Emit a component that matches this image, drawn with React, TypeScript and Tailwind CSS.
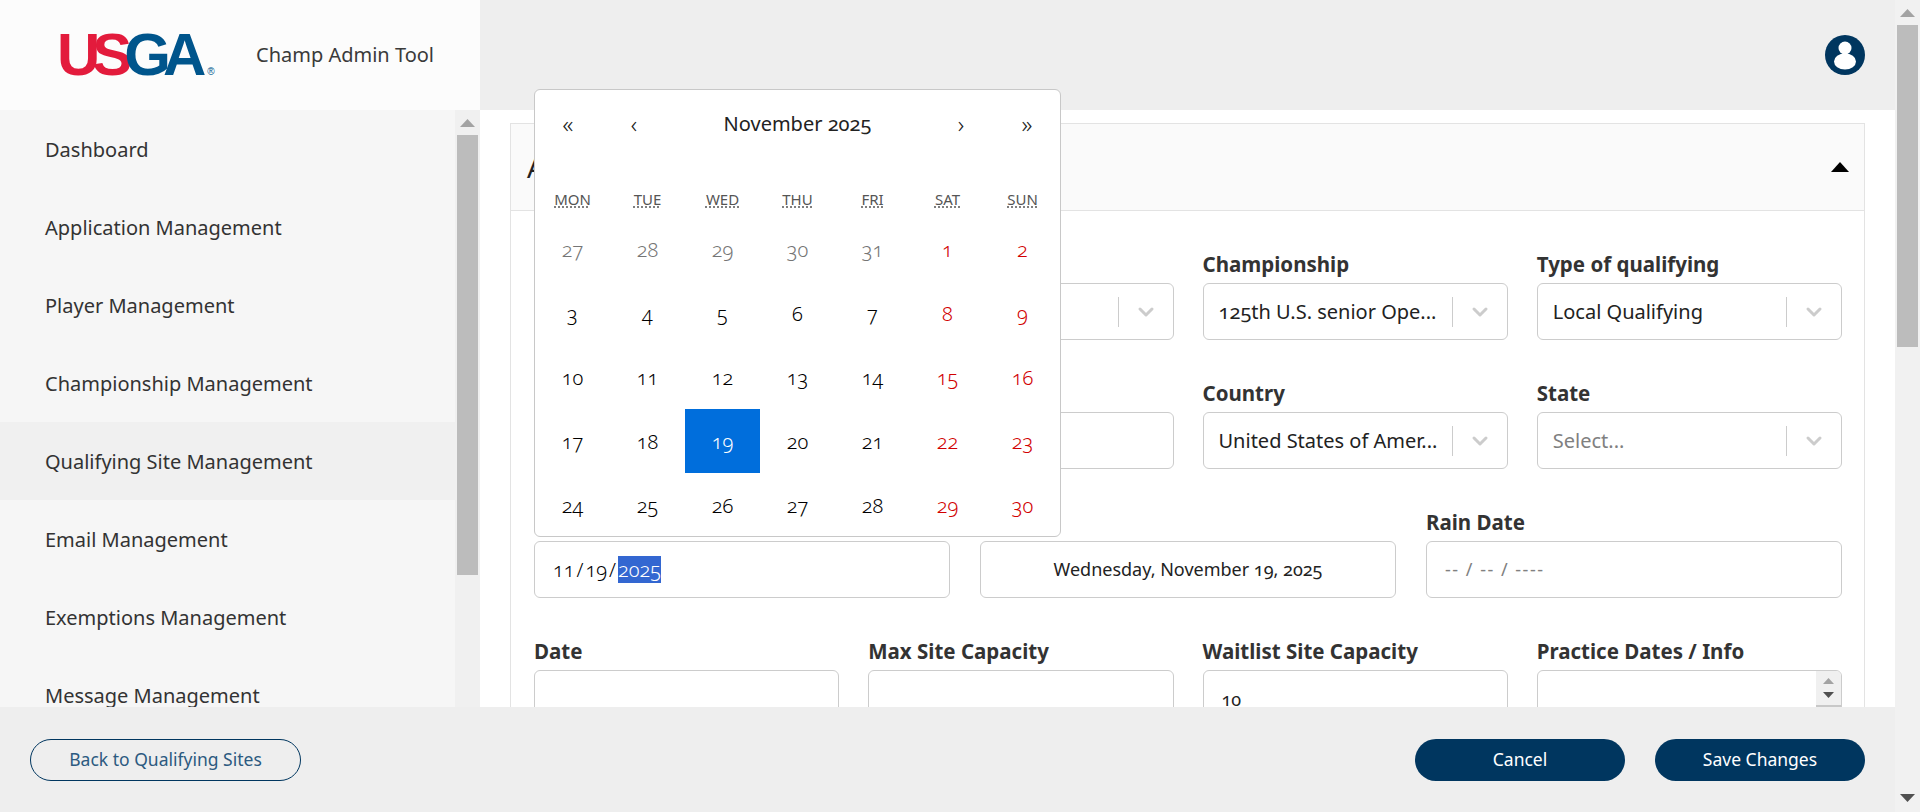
import { ChevronDown } from "lucide-react";

const NAV = [
  "Dashboard",
  "Application Management",
  "Player Management",
  "Championship Management",
  "Qualifying Site Management",
  "Email Management",
  "Exemptions Management",
  "Message Management",
];

const WEEKDAYS = ["MON", "TUE", "WED", "THU", "FRI", "SAT", "SUN"];

const DAYS = [
  27, 28, 29, 30, 31, 1, 2, 3, 4, 5, 6, 7, 8, 9, 10, 11, 12, 13, 14, 15, 16, 17, 18, 19, 20, 21, 22, 23, 24, 25, 26, 27,
  28, 29, 30,
];

function Arrow({ up, className }: { up?: boolean; className: string }) {
  return (
    <svg width="15" height="8" viewBox="0 0 15 8" className={className}>
      <path d={up ? "M7.5 0L15 8H0z" : "M0 0H15L7.5 8z"} fill="currentColor" />
    </svg>
  );
}

function Label({ children }: { children?: string }) {
  return <div className="mb-1.5 h-[26px] text-[20.5px] leading-[26px] font-bold text-[#333]">{children}</div>;
}

function Select({ label, value, placeholder }: { label?: string; value?: string; placeholder?: string }) {
  return (
    <div>
      <Label>{label}</Label>
      <div className="flex h-[57px] items-center rounded-md border border-[#ccc] bg-white pl-[15px]">
        <span
          className={`min-w-0 flex-1 text-[20px] whitespace-nowrap oldstyle-nums ${
            placeholder ? "text-[#808080]" : "text-[#222]"
          }`}
        >
          {value ?? placeholder}
        </span>
        <span className="h-[30px] w-px bg-[#ccc]" />
        <span className="flex w-[54px] justify-center text-[#ccc]">
          <ChevronDown size={24} strokeWidth={3} />
        </span>
      </div>
    </div>
  );
}

function Field({ label, children }: { label?: string; children?: React.ReactNode }) {
  return (
    <div>
      <Label>{label}</Label>
      <div className="relative flex h-[57px] items-center overflow-hidden rounded-md border border-[#ccc] bg-white px-[18px] text-[18px] text-[#222] oldstyle-nums">
        {children}
      </div>
    </div>
  );
}

function Calendar() {
  return (
    <div className="absolute top-[-35px] left-[23px] z-10 h-[448px] w-[527px] rounded-md border border-[#c8c8c8] bg-white font-light text-black oldstyle-nums">
      <div className="mb-[25px] flex h-[68px] items-center text-[24px] text-[#222]">
        <span className="w-[66px] text-center">«</span>
        <span className="w-[66px] text-center">‹</span>
        <span className="flex-1 text-center text-[20px] font-normal">November 2025</span>
        <span className="w-[66px] text-center">›</span>
        <span className="w-[66px] text-center">»</span>
      </div>
      <div className="mb-[2px] grid h-[32px] grid-cols-7 items-center text-center text-[15px] font-normal text-[#555]">
        {WEEKDAYS.map((d) => (
          <span key={d} className="underline decoration-dotted underline-offset-2">
            {d}
          </span>
        ))}
      </div>
      <div className="grid grid-cols-7 text-[20px]">
        {DAYS.map((d, i) => {
          const selected = i === 23;
          const weekend = i % 7 >= 5;
          const other = i < 5;
          return (
            <span
              key={i}
              className={`flex h-16 items-center justify-center pt-px ${
                selected ? "bg-[#006edc] text-white" : weekend ? "text-[#d10000]" : other ? "text-[#757575]" : ""
              }`}
            >
              {d}
            </span>
          );
        })}
      </div>
    </div>
  );
}

export default function App() {
  return (
    <div className="flex h-[812px] w-full overflow-hidden bg-white font-['Noto_Sans',sans-serif] text-[#333]">
      <div className="flex min-w-0 flex-1 flex-col">
        <div className="flex min-h-0 flex-1">
          <aside className="flex w-[480px] shrink-0 flex-col">
            <div className="flex h-[110px] shrink-0 items-center bg-[#fcfcfc] pl-[57px]">
              <div className="flex w-[199px] items-end font-['Liberation_Sans',sans-serif] text-[60px] leading-[60px] font-bold tracking-[-8px]">
                <span className="text-[#e31b3c]">US</span>
                <span className="text-[#00558c]">GA</span>
                <span className="mb-2 ml-[9px] text-[10px] leading-[10px] font-normal tracking-normal text-[#00558c]">®</span>
              </div>
              <span className="text-[20px] text-[#3a3a3a]">Champ Admin Tool</span>
            </div>
            <div className="flex min-h-0 flex-1 overflow-hidden bg-[#f6f6f6]">
              <nav className="min-w-0 flex-1">
                {NAV.map((item) => (
                  <div
                    key={item}
                    className={`flex h-[78px] items-center pt-px pl-[45px] text-[20px] ${
                      item === "Qualifying Site Management" ? "bg-[#f0f0f0]" : ""
                    }`}
                  >
                    {item}
                  </div>
                ))}
              </nav>
              <div className="flex w-[25px] shrink-0 flex-col items-center bg-[#f0f0f0]">
                <Arrow up className="mt-[9px] mb-[8px] text-[#a3a3a3]" />
                <div className="h-[440px] w-[21px] bg-[#bcbcbc]" />
              </div>
            </div>
          </aside>
          <main className="flex min-w-0 flex-1 flex-col">
            <div className="flex h-[110px] shrink-0 items-center justify-end bg-[#eeeeee] pr-[30px]">
              <svg width="40" height="40" viewBox="0 0 40 40">
                <circle cx="20" cy="20" r="20" fill="#00365f" />
                <circle cx="20" cy="13" r="6.5" fill="#fff" />
                <ellipse cx="20" cy="26.5" rx="11" ry="8" fill="#fff" />
              </svg>
            </div>
            <div className="min-h-0 flex-1 px-[30px] pt-[13px]">
              <div className="relative border border-[#e3e3e3]">
                <div className="flex h-[87px] items-center justify-between border-b border-[#e3e3e3] bg-[#fafafa] pr-[15px] pl-4">
                  <span className="text-[28px] text-[#222]">A</span>
                  <svg width="18" height="10" viewBox="0 0 18 10">
                    <path d="M9 0L18 10H0z" fill="#000" />
                  </svg>
                </div>
                <Calendar />
                <div className="pt-[40px] pr-[22px] pl-[23px]">
                  <div className="mb-[40px] grid grid-cols-4 gap-x-[29px]">
                    <div />
                    <Select />
                    <Select label="Championship" value="125th U.S. senior Ope..." />
                    <Select label="Type of qualifying" value="Local Qualifying" />
                  </div>
                  <div className="mb-[40px] grid grid-cols-4 gap-x-[29px]">
                    <div />
                    <Field />
                    <Select label="Country" value="United States of Amer..." />
                    <Select label="State" placeholder="Select..." />
                  </div>
                  <div className="mb-[40px] grid grid-cols-3 gap-x-[30px]">
                    <Field>
                      <span className="text-[20px] font-light text-black">
                        11<span className="mx-[2px]">/</span>19<span className="mx-[2px]">/</span>
                        <span className="bg-[#3367d1] text-white">2025</span>
                      </span>
                    </Field>
                    <Field>
                      <span className="w-full text-center">Wednesday, November 19, 2025</span>
                    </Field>
                    <Field label="Rain Date">
                      <span className="tracking-[1.5px] text-[#808080]">-- / -- / ----</span>
                    </Field>
                  </div>
                  <div className="grid grid-cols-4 gap-x-[29px]">
                    <Field label="Date" />
                    <Field label="Max Site Capacity" />
                    <Field label="Waitlist Site Capacity">
                      <span className="mt-[2px]">10</span>
                    </Field>
                    <Field label="Practice Dates / Info">
                      <div className="absolute top-0 right-0 flex h-full w-[25px] flex-col items-center bg-[#f0f0f0] pt-[6px]">
                        <Arrow up className="mb-[6px] w-[11px] text-[#a3a3a3]" />
                        <Arrow className="mb-[6px] w-[11px] text-[#505050]" />
                        <div className="w-full flex-1 bg-[#c8c8c8]" />
                      </div>
                    </Field>
                  </div>
                </div>
              </div>
            </div>
          </main>
        </div>
        <footer className="z-20 flex h-[105px] shrink-0 items-center justify-between bg-[#eeeeee] pr-[30px] pl-[30px]">
          <button className="h-[42px] w-[271px] rounded-full border border-[#00365f] text-[17.5px] text-[#2c5a80]">
            Back to Qualifying Sites
          </button>
          <div className="flex gap-[30px]">
            <button className="h-[42px] w-[210px] rounded-full bg-[#00365f] text-[17.5px] text-white">Cancel</button>
            <button className="h-[42px] w-[210px] rounded-full bg-[#00365f] text-[17.5px] text-white">Save Changes</button>
          </div>
        </footer>
      </div>
      <div className="flex w-[25px] shrink-0 flex-col items-center bg-[#f1f1f1]">
        <Arrow up className="mt-[9px] mb-[8px] text-[#a3a3a3]" />
        <div className="h-[322px] w-[21px] bg-[#bcbcbc]" />
        <Arrow className="mt-auto mb-[10px] text-[#505050]" />
      </div>
    </div>
  );
}
